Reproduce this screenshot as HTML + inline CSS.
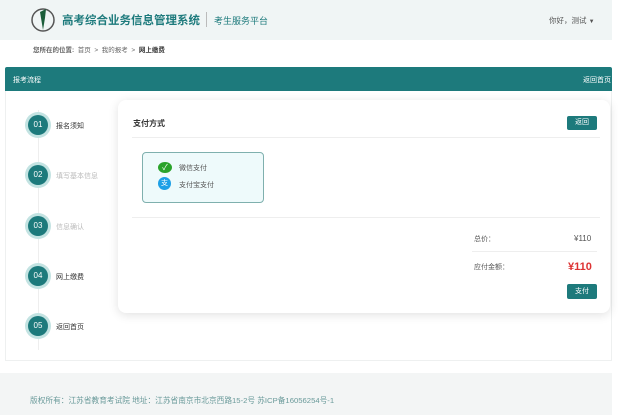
<!DOCTYPE html>
<html><head><meta charset="utf-8"><style>
*{margin:0;padding:0;box-sizing:border-box}
body{width:618px;height:415px;overflow:hidden;background:#fff;font-family:"Liberation Sans","Noto Sans CJK SC",sans-serif;position:relative;color:#333}
.abs{position:absolute}
.hdr{left:0;top:0;width:612px;height:40px;background:#f0f5f5}
.t{font-size:12px;white-space:nowrap}
.bar{left:5px;top:67px;width:607px;height:24px;background:#1d7a7c;border-radius:2px 2px 0 0}
.box{left:5px;top:91px;width:607px;height:270px;border:1px solid #eef0f0;border-top:none;background:#fff}
.vl{left:38px;top:110px;width:1px;height:240px;background:#eee}
.st{left:28px;width:20px;height:20px;border-radius:50%;background:#1d7a7c;color:#fff;font-size:8px;text-align:center;line-height:20px;box-shadow:0 0 0 3px #c3e3e2}
.sl{left:56px;font-size:7px}
.card{left:118px;top:100px;width:492px;height:213px;background:#fff;border-radius:8px;box-shadow:0 2px 10px rgba(0,0,0,.12)}
.btn{background:#1d7a7c;color:#fff;font-size:7px;text-align:center;border-radius:2px}
.foot{left:0;top:373px;width:612px;height:42px;background:#f3f5f5}
</style></head><body>
<div class="abs hdr"></div>
<svg class="abs" style="left:30px;top:6px" width="26" height="28" viewBox="0 0 26 28"><circle cx="13" cy="14" r="11" fill="none" stroke="#555" stroke-width="1.5"/><path d="M10 6 L16 3 L15 12 L13 24 L11 12 Z" fill="#1b5e3a"/></svg>
<div class="abs" style="left:62px;top:12px;font-size:11.5px;font-weight:bold;color:#1d7a7c;white-space:nowrap">高考综合业务信息管理系统</div>
<div class="abs" style="left:206px;top:12px;width:1px;height:15px;background:#bbb"></div>
<div class="abs t" style="left:214px;top:14px;font-size:9px;color:#1d7a7c">考生服务平台</div>
<div class="abs t" style="left:549px;top:15px;font-size:7.5px;color:#555">你好，测试 <span style="font-size:6px">▼</span></div>
<div class="abs t" style="left:33px;top:44px;font-size:6.5px;color:#666"><b>您所在的位置:</b> &nbsp;首页 &nbsp;&gt;&nbsp; 我的报考 &nbsp;&gt;&nbsp; <b style="color:#333">网上缴费</b></div>
<div class="abs bar"></div>
<div class="abs t" style="left:13px;top:75px;font-size:7px;color:#fff">报考流程</div>
<div class="abs t" style="left:583px;top:75px;font-size:7px;color:#fff">返回首页</div>
<div class="abs box"></div>
<div class="abs vl"></div>
<div class="abs st" style="top:115px">01</div><div class="abs sl" style="top:121px">报名须知</div>
<div class="abs st" style="top:165px">02</div><div class="abs sl" style="top:171px;color:#bbb">填写基本信息</div>
<div class="abs st" style="top:216px">03</div><div class="abs sl" style="top:222px;color:#bbb">信息确认</div>
<div class="abs st" style="top:266px">04</div><div class="abs sl" style="top:272px">网上缴费</div>
<div class="abs st" style="top:316px">05</div><div class="abs sl" style="top:322px">返回首页</div>
<div class="abs card"></div>
<div class="abs t" style="left:133px;top:118px;font-size:8px;font-weight:bold">支付方式</div>
<div class="abs btn" style="left:567px;top:116px;width:30px;height:14px;line-height:14px">返回</div>
<div class="abs" style="left:132px;top:137px;width:468px;height:1px;background:#eee"></div>
<div class="abs" style="left:142px;top:152px;width:122px;height:51px;border:1px solid #7fb0ae;border-radius:4px;background:#eefafb"></div>
<div class="abs" style="left:158px;top:162px;width:14px;height:11px;border-radius:50%;background:#2aa32a;color:#fff;font-size:8px;text-align:center;line-height:11px">✓</div>
<div class="abs t" style="left:179px;top:163px;font-size:7px;color:#555">微信支付</div>
<div class="abs" style="left:158px;top:177px;width:13px;height:13px;border-radius:50%;background:#1ea0e6;color:#fff;font-size:7px;text-align:center;line-height:13px">支</div>
<div class="abs t" style="left:179px;top:180px;font-size:7px;color:#555">支付宝支付</div>
<div class="abs" style="left:132px;top:217px;width:468px;height:1px;background:#eee"></div>
<div class="abs t" style="left:474px;top:234px;font-size:7px;color:#555">总价：</div>
<div class="abs t" style="left:574px;top:234px;font-size:8px;color:#555">¥110</div>
<div class="abs" style="left:472px;top:251px;width:125px;height:1px;background:#eee"></div>
<div class="abs t" style="left:474px;top:262px;font-size:7px;color:#555">应付金额：</div>
<div class="abs t" style="left:568px;top:261px;font-size:11px;font-weight:bold;color:#d33">¥110</div>
<div class="abs btn" style="left:567px;top:284px;width:30px;height:15px;line-height:15px">支付</div>
<div class="abs foot"></div>
<div class="abs t" style="left:30px;top:395px;font-size:7.7px;color:#6a9a9a">版权所有：江苏省教育考试院 地址：江苏省南京市北京西路15-2号 苏ICP备16056254号-1</div>
</body></html>
